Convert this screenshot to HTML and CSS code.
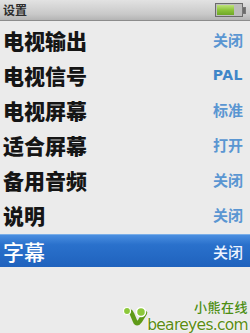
FILE: index.html
```html
<!DOCTYPE html>
<html lang="zh">
<head>
<meta charset="utf-8">
<link rel="stylesheet" href="styles.css">
</head>
<body>
<div class="screen">
  <div class="header">
    <span class="title">设置</span>
    <span class="battery"><span class="cell"></span></span>
  </div>
  <ul class="menu">
    <li class="row"><span class="label">电视输出</span><span class="value">关闭</span></li>
    <li class="row"><span class="label">电视信号</span><span class="value latin">PAL</span></li>
    <li class="row"><span class="label">电视屏幕</span><span class="value">标准</span></li>
    <li class="row"><span class="label">适合屏幕</span><span class="value">打开</span></li>
    <li class="row"><span class="label">备用音频</span><span class="value">关闭</span></li>
    <li class="row"><span class="label">说明</span><span class="value">关闭</span></li>
    <li class="row selected"><span class="label">字幕</span><span class="value">关闭</span></li>
  </ul>
  <div class="watermark">
    <svg class="wm-icon" width="27" height="22" viewBox="0 0 27 22">
      <path d="M4 7 C6 4 9 6 10 9 L13 16 C14 19 16 19 18 16 L23 8" fill="none" stroke="#5f9a18" stroke-width="4.5" stroke-linecap="round"/>
      <circle cx="19" cy="7" r="4.5" fill="#8cc83a" stroke="#fff" stroke-width="1.5"/>
      <circle cx="5" cy="6" r="3.5" fill="#8cc83a" stroke="#fff" stroke-width="1.2"/>
    </svg>
    <div class="wm-text">
      <span class="wm-cn">小熊在线</span>
      <span class="wm-en">beareyes.com</span>
    </div>
  </div>
</div>
</body>
</html>
```
FILE: styles.css
```css
html, body {
  margin: 0;
  padding: 0;
}
body {
  width: 250px;
  height: 333px;
  overflow: hidden;
  background: #e9e9e9;
  font-family: "Noto Sans CJK SC", "DejaVu Sans", sans-serif;
}
.screen {
  position: relative;
  width: 250px;
  height: 333px;
  background: #ebebeb;
}
.header {
  height: 20px;
  display: flex;
  align-items: center;
  justify-content: space-between;
  padding: 0 4px 0 3px;
  background: linear-gradient(#e2e2e2, #c9c9c9 70%, #b4b4b4);
  border-bottom: 1px solid #8c8c8c;
}
.title {
  font-size: 12px;
  line-height: 12px;
  font-weight: 700;
  color: #2e2e2e;
}
.battery {
  position: relative;
  width: 24px;
  height: 10px;
  border: 1px solid #6b6b6b;
  background: #bdbdbd;
  margin-right: 3px;
  display: flex;
  padding: 1px;
  box-sizing: content-box;
}
.battery::after {
  content: "";
  position: absolute;
  right: -4px;
  top: 3px;
  width: 2px;
  height: 5px;
  background: #6b6b6b;
  border: 1px solid #777;
}
.cell {
  width: 17px;
  height: 10px;
  background: linear-gradient(#bfe27a, #8cc43a 50%, #6fa728);
}
.menu {
  list-style: none;
  margin: 1px 0 0;
  padding: 0;
}
.row {
  height: 35px;
  display: flex;
  align-items: center;
  justify-content: space-between;
  padding: 0 7px 0 3px;
}
.label {
  font-size: 21px;
  font-weight: 900;
  color: #151515;
}
.value {
  font-size: 15px;
  font-weight: 700;
  color: #5a96d2;
}
.value.latin {
  font-family: "DejaVu Sans", sans-serif;
  font-size: 14px;
  letter-spacing: 0.5px;
  color: #3f86c8;
}
.row.selected {
  background: linear-gradient(#4a8ee0, #2a71cc 30%, #1f62bd);
  border-top: 1px solid #7aaee8;
  height: 32px;
  margin-top: 2px;
}
.row.selected .label {
  color: #ffffff;
  font-weight: 500;
}
.row.selected .value {
  color: #eef4ff;
  font-weight: 500;
}
.watermark {
  position: absolute;
  right: 2px;
  bottom: -1px;
  display: flex;
  align-items: flex-end;
}
.wm-icon {
  margin-bottom: 7px;
  margin-right: -2px;
}
.wm-text {
  display: flex;
  flex-direction: column;
  align-items: flex-end;
}
.wm-cn {
  font-size: 13px;
  line-height: 19px;
  color: #4c8e12;
  font-weight: 500;
  letter-spacing: 0.5px;
}
.wm-en {
  font-family: "DejaVu Sans", sans-serif;
  font-size: 15.5px;
  line-height: 18px;
  color: #5c8c14;
  letter-spacing: -0.7px;
  text-shadow: 0 0 2px #fff, 0 0 1px #fff;
}
```
